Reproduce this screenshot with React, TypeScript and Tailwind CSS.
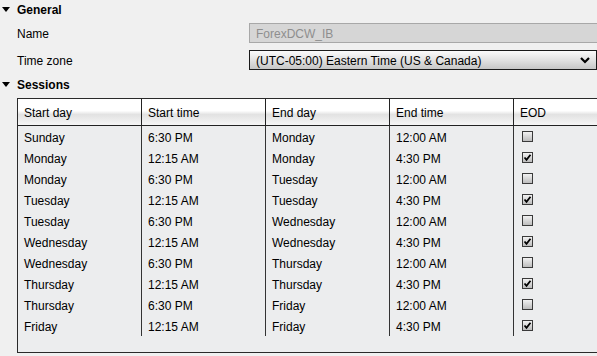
import React from "react";

const rows: [string, string, string, string, boolean][] = [
  ["Sunday", "6:30 PM", "Monday", "12:00 AM", false],
  ["Monday", "12:15 AM", "Monday", "4:30 PM", true],
  ["Monday", "6:30 PM", "Tuesday", "12:00 AM", false],
  ["Tuesday", "12:15 AM", "Tuesday", "4:30 PM", true],
  ["Tuesday", "6:30 PM", "Wednesday", "12:00 AM", false],
  ["Wednesday", "12:15 AM", "Wednesday", "4:30 PM", true],
  ["Wednesday", "6:30 PM", "Thursday", "12:00 AM", false],
  ["Thursday", "12:15 AM", "Thursday", "4:30 PM", true],
  ["Thursday", "6:30 PM", "Friday", "12:00 AM", false],
  ["Friday", "12:15 AM", "Friday", "4:30 PM", true],
];

function Triangle() {
  return (
    <svg width="8" height="5" viewBox="0 0 8 5" className="ml-[2px] mr-[7px]">
      <polygon points="0,0 8,0 4,5" fill="#000" />
    </svg>
  );
}

function Check({ on }: { on: boolean }) {
  return (
    <div className="w-[11px] h-[11px] border border-[#3a3a3a] bg-gradient-to-b from-[#f2f2f2] to-[#bdbdbd] flex items-center justify-center">
      {on && (
        <svg width="9" height="9" viewBox="0 0 9 9">
          <path d="M1.5 4.5 L3.5 6.8 L7.5 1.8" stroke="#000" strokeWidth="1.8" fill="none" />
        </svg>
      )}
    </div>
  );
}

const cols = ["Start day", "Start time", "End day", "End time", "EOD"];

export default function App() {
  return (
    <div
      className="w-[597px] h-[356px] bg-[#f0f0f0] overflow-hidden text-[12px] text-black"
      style={{ fontFamily: '"Liberation Sans", Arial, sans-serif' }}
    >
      <div className="flex flex-col">
        <div className="h-[18px] flex items-center">
          <Triangle />
          <span className="font-bold pt-[2px]">General</span>
        </div>
        <div className="mt-[5px] h-[20px] flex items-center">
          <span className="w-[249px] pl-[17px] pt-[2px]">Name</span>
          <div className="flex-1 h-[20px] border border-[#a8a8a8] border-r-0 bg-[#d6d6d6] flex items-center pl-[6px] text-[#8e8e8e]">
            <span className="pt-[2px]">ForexDCW_IB</span>
          </div>
        </div>
        <div className="mt-[7px] h-[20px] flex items-center">
          <span className="w-[249px] pl-[17px] pt-[2px]">Time zone</span>
          <div className="flex-1 h-[20px] border border-[#1a1a1a] bg-gradient-to-b from-[#fbfbfb] via-[#e2e2e2] to-[#c6c6c6] flex items-center pl-[6px] pr-[4px]">
            <span className="flex-1 pt-[2px]">(UTC-05:00) Eastern Time (US &amp; Canada)</span>
            <svg width="10" height="7" viewBox="0 0 10 7" className="mr-[2px]">
              <path d="M1 1 L5 5 L9 1" stroke="#000" strokeWidth="2.2" fill="none" />
            </svg>
          </div>
        </div>
        <div className="mt-[5px] h-[18px] flex items-center">
          <Triangle />
          <span className="font-bold pt-[2px]">Sessions</span>
        </div>
        <div className="mt-[5px] ml-[17px] w-[640px] h-[255px] border border-[#2a2a2a] bg-[#ecedee] flex flex-col">
          <div className="h-[27px] flex border-b border-[#222] bg-[linear-gradient(to_bottom,#ffffff_0%,#ffffff_45%,#e2e2e2_60%,#f6f6f6_100%)]">
            {cols.map((c, i) => (
              <div
                key={c}
                className={`w-[124px] flex items-center pl-[6px] pt-[2px] ${i < 4 ? "border-r border-[#222]" : ""}`}
              >
                {c}
              </div>
            ))}
          </div>
          <div className="flex">
            {[0, 1, 2, 3, 4].map((ci) => (
              <div
                key={ci}
                className={`w-[124px] flex flex-col ${ci < 4 ? "border-r border-[#333]" : ""}`}
              >
                {rows.map((r, ri) => (
                  <div key={ri} className="h-[21px] flex items-center pl-[6px]">
                    {ci < 4 ? (
                      <span className="pt-[2px]">{r[ci] as string}</span>
                    ) : (
                      <div className="pl-[2px]">
                        <Check on={r[4]} />
                      </div>
                    )}
                  </div>
                ))}
              </div>
            ))}
          </div>
        </div>
      </div>
    </div>
  );
}
